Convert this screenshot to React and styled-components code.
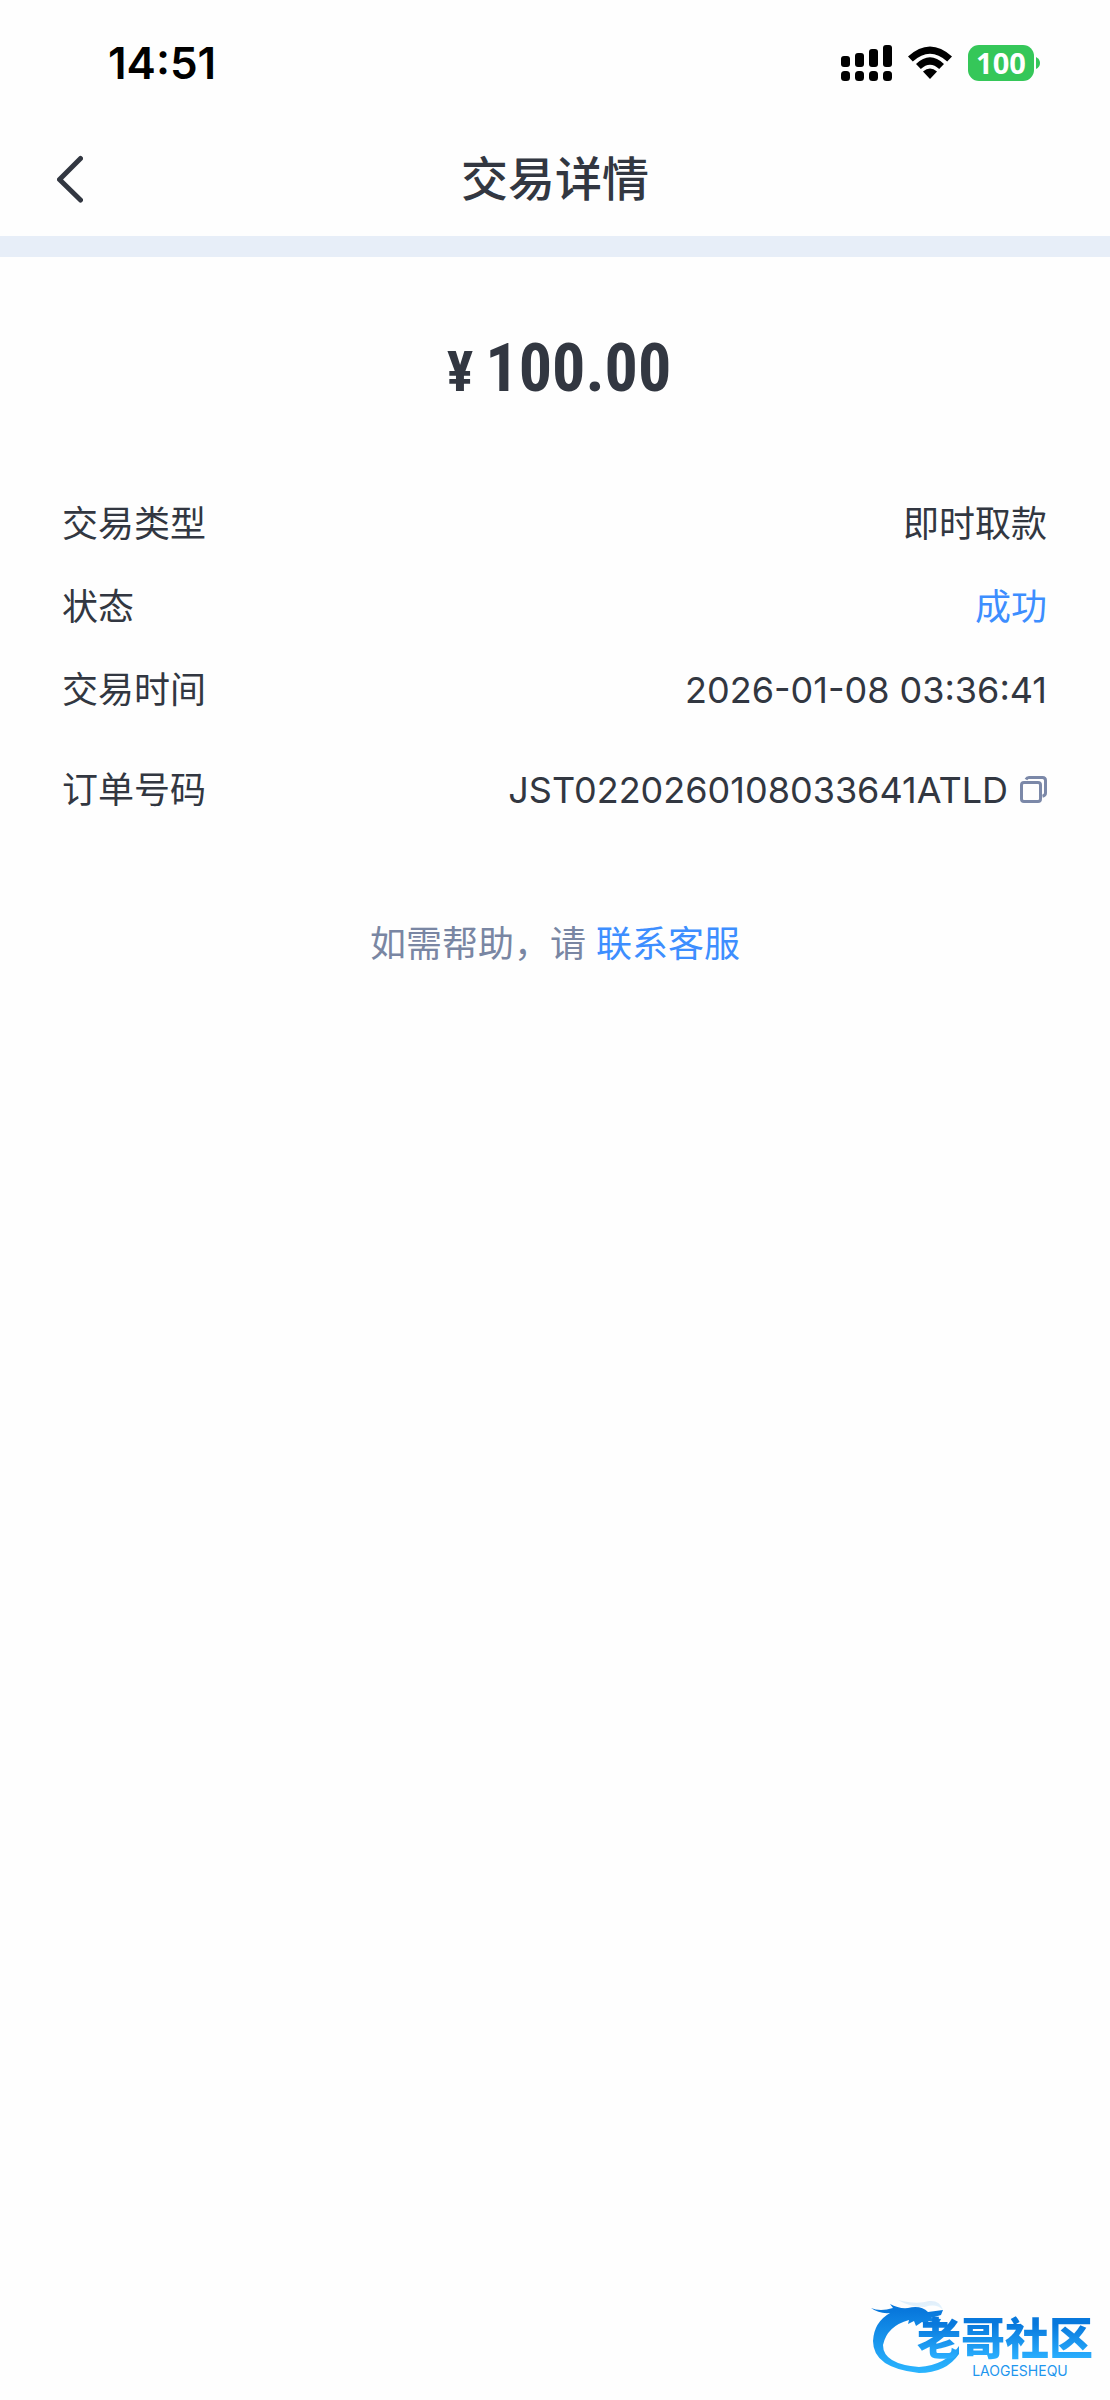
import React from "react";
import styled, { createGlobalStyle } from "styled-components";

const GlobalStyle = createGlobalStyle`
  * { box-sizing: border-box; }
  body { margin: 0; background: #fefefe; }
  button { border: 0; padding: 0; background: none; font: inherit; color: inherit; cursor: pointer; }
  svg { display: block; }
`;

const Page = styled.div`
  display: flex;
  flex-direction: column;
  min-height: 100vh;
  color: #323741;
  font-family: Inter, "Noto Sans CJK SC", sans-serif;
`;

const StatusBar = styled.div`
  display: flex;
  align-items: center;
  justify-content: space-between;
  height: 124px;
  padding: 1px 70px 0 108px;
  color: #000;
`;

const Clock = styled.time`
  font-size: 44px;
  font-weight: 600;
  line-height: 52px;
`;

const StatusIcons = styled.div`
  display: flex;
  align-items: center;
  gap: 16px;
`;

const Battery = styled.div`
  display: flex;
  align-items: center;
  gap: 2px;
`;

const BatteryBody = styled.span`
  width: 66px;
  height: 36px;
  border-radius: 11px;
  background: #35c759;
  color: #fff;
  font-family: "Noto Sans", sans-serif;
  font-size: 29px;
  font-weight: 700;
  line-height: 36px;
  text-align: center;
`;

const Header = styled.header`
  display: grid;
  grid-template-columns: 80px 1fr 80px;
  align-items: center;
  height: 112px;
  padding: 0 30px 2px;
`;

const BackButton = styled.button`
  display: flex;
  align-items: center;
  justify-content: center;
  width: 80px;
  height: 80px;
`;

const Title = styled.h1`
  margin: 0;
  font-size: 47px;
  font-weight: 500;
  line-height: 64px;
  text-align: center;
`;

const Band = styled.div`
  height: 21px;
  background: #e7eef8;
`;

const Amount = styled.p`
  display: flex;
  align-items: baseline;
  justify-content: center;
  gap: 12px;
  margin: 0;
  padding: 66px 0 64px 8px;
  font-family: "Roboto Condensed", Roboto, sans-serif;
  font-size: 66px;
  font-weight: 700;
  line-height: 92px;
`;

const Currency = styled.span`
  font-size: 56px;
`;

const Details = styled.dl`
  display: flex;
  flex-direction: column;
  margin: 0;
  padding: 0 63px 0 62px;
`;

const Row = styled.div`
  display: flex;
  align-items: center;
  justify-content: space-between;
  height: ${(p) => (p.$tall ? 117 : 83)}px;
  font-size: 36px;
  line-height: 52px;
`;

const Label = styled.dt``;

const Value = styled.dd`
  display: flex;
  align-items: center;
  gap: 12px;
  margin: 0;
  color: ${(p) => (p.$accent ? "#3d8eff" : "inherit")};
`;

const Help = styled.p`
  margin: 0;
  padding-top: 70px;
  color: #7986a3;
  font-size: 36px;
  line-height: 52px;
  text-align: center;
`;

const HelpLink = styled.a`
  color: #3d8eff;
  text-decoration: none;
`;

const Brand = styled.footer`
  display: flex;
  align-items: flex-end;
  align-self: flex-end;
  margin-top: auto;
  padding: 0 17px 22px 0;
`;

const DragonMark = styled.svg`
  margin: 0 -46px 4px 0;
`;

const BrandText = styled.div`
  display: flex;
  flex-direction: column;
  align-items: center;
`;

const BrandName = styled.span`
  font-size: 44px;
  font-weight: 900;
  line-height: 50px;
  color: transparent;
  background: linear-gradient(#0878dc 20%, #2bb0ff 90%);
  background-clip: text;
  -webkit-background-clip: text;
`;

const BrandLatin = styled.span`
  padding-left: 30px;
  font-size: 14px;
  line-height: 14px;
  color: #1f96ee;
`;

const barTops = [11, 8, 4, 0];

function SignalIcon() {
  return (
    <svg width="51" height="36" viewBox="0 0 51 36" aria-hidden="true">
      {barTops.map((top, i) => (
        <g key={top}>
          <rect x={i * 14} y={top} width="9" height={22 - top} rx="3" />
          <rect x={i * 14} y="26" width="9" height="10" rx="3.5" />
        </g>
      ))}
    </svg>
  );
}

function WifiIcon() {
  return (
    <svg width="44" height="34" viewBox="0 0 44 34" aria-hidden="true">
      <path d="M0 10.5Q22-9.5 44 10.5L39.2 15.5Q22 0 4.800 15.500Z" />
      <path d="M8 18Q22 4.500 36 18L31.200 23Q22 14.500 12.800 23Z" />
      <path d="M15 25.500Q22 19.500 29 25.500L22 33Z" />
    </svg>
  );
}

function CopyIcon() {
  return (
    <svg width="27" height="27" viewBox="0 0 27 27" fill="none" stroke="#7b88a8" strokeWidth="3" aria-hidden="true">
      <rect x="1.500" y="6.500" width="19" height="19" rx="2.500" />
      <path d="M6 3.500Q7 1.500 9 1.500H22.500Q25.500 1.500 25.500 4.500V17Q25.500 19.500 22.500 20.200" />
    </svg>
  );
}

function Dragon() {
  return (
    <DragonMark width="92" height="76" viewBox="0 0 92 76" aria-hidden="true">
      <defs>
        <linearGradient id="dragonBlue" x1="0" y1="0" x2="0" y2="1">
          <stop offset="0.100" stopColor="#0878dc" />
          <stop offset="1" stopColor="#2bb5ff" />
        </linearGradient>
      </defs>
      <g fill="url(#dragonBlue)">
        <path d="M0 10Q9 14 22 10L19 6Q28 11 37 10Q50 7 57 14L72 12L70 17L60 20L70 21L68 25L57 23L61 28L51 24L45 28L43 23L37 26L38 22Q16 28 12 47Q12 66 48 69Q75 67 88 48V56Q75 75 48 75Q2 70 2 43Q3 24 19 15Q8 16 0 10Z" />
        <path d="M27 2Q46 7 58 3Q69 2 72 12Q65 5 54 9Q41 10 27 2Z" opacity="0.120" />
      </g>
    </DragonMark>
  );
}

export default function App() {
  return (
    <Page lang="zh-CN">
      <GlobalStyle />
      <StatusBar>
        <Clock>14:51</Clock>
        <StatusIcons>
          <SignalIcon />
          <WifiIcon />
          <Battery>
            <BatteryBody>100</BatteryBody>
            <svg width="4" height="12" viewBox="0 0 4 12" fill="#35c759" aria-hidden="true">
              <path d="M0 0Q4 2 4 6T0 12Z" />
            </svg>
          </Battery>
        </StatusIcons>
      </StatusBar>
      <Header>
        <BackButton type="button" aria-label="返回">
          <svg width="26" height="48" viewBox="0 0 26 48" fill="none" stroke="#323741" strokeWidth="5" strokeLinecap="round" strokeLinejoin="round" aria-hidden="true">
            <path d="M23.500 3.500L2.500 24.500L23.500 45" />
          </svg>
        </BackButton>
        <Title>交易详情</Title>
      </Header>
      <Band />
      <main>
        <Amount>
          <Currency>¥</Currency>
          <span>100.00</span>
        </Amount>
        <Details>
          <Row>
            <Label>交易类型</Label>
            <Value>即时取款</Value>
          </Row>
          <Row>
            <Label>状态</Label>
            <Value $accent>成功</Value>
          </Row>
          <Row>
            <Label>交易时间</Label>
            <Value>2026-01-08 03:36:41</Value>
          </Row>
          <Row $tall>
            <Label>订单号码</Label>
            <Value>
              JST0220260108033641ATLD
              <button type="button" aria-label="复制">
                <CopyIcon />
              </button>
            </Value>
          </Row>
        </Details>
        <Help>
          如需帮助，请 <HelpLink href="#support">联系客服</HelpLink>
        </Help>
      </main>
      <Brand>
        <Dragon />
        <BrandText>
          <BrandName>老哥社区</BrandName>
          <BrandLatin>LAOGESHEQU</BrandLatin>
        </BrandText>
      </Brand>
    </Page>
  );
}
